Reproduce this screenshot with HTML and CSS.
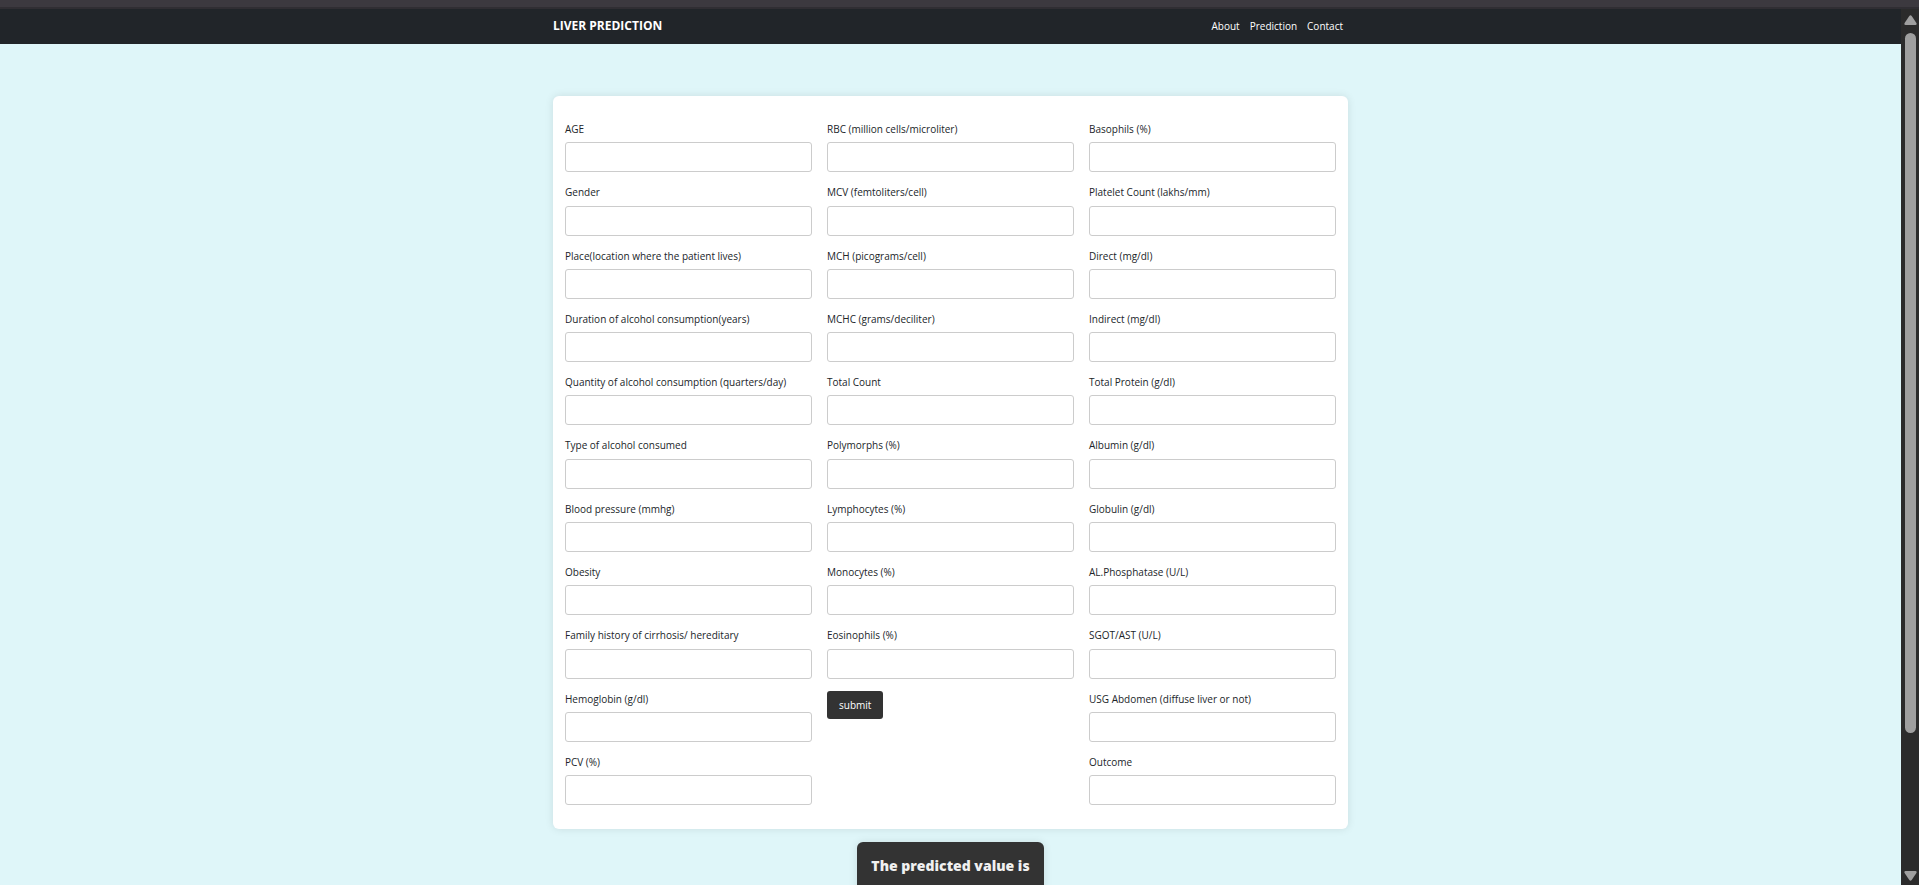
FILE: index.html
```html
<!DOCTYPE html>
<html lang="en">
<head>
<meta charset="utf-8">
<title>Liver Prediction</title>
<link rel="stylesheet" href="styles.css">
</head>
<body>
<div class="chrome-edge"></div>
<div class="window">
  <div class="page">
    <header class="navbar">
      <div class="container navbar-inner">
        <a class="brand" href="#">LIVER PREDICTION</a>
        <nav class="links">
          <a href="#about">About</a>
          <a href="#prediction">Prediction</a>
          <a href="#contact">Contact</a>
        </nav>
      </div>
    </header>
    <main class="container main">
      <form class="card" id="prediction">
        <div class="column">
          <div class="field"><label for="age">AGE</label><input id="age" type="text"></div>
          <div class="field"><label for="gender">Gender</label><input id="gender" type="text"></div>
          <div class="field"><label for="place">Place(location where the patient lives)</label><input id="place" type="text"></div>
          <div class="field"><label for="duration">Duration of alcohol consumption(years)</label><input id="duration" type="text"></div>
          <div class="field"><label for="quantity">Quantity of alcohol consumption (quarters/day)</label><input id="quantity" type="text"></div>
          <div class="field"><label for="type">Type of alcohol consumed</label><input id="type" type="text"></div>
          <div class="field"><label for="bp">Blood pressure (mmhg)</label><input id="bp" type="text"></div>
          <div class="field"><label for="obesity">Obesity</label><input id="obesity" type="text"></div>
          <div class="field"><label for="family">Family history of cirrhosis/ hereditary</label><input id="family" type="text"></div>
          <div class="field"><label for="hemoglobin">Hemoglobin (g/dl)</label><input id="hemoglobin" type="text"></div>
          <div class="field"><label for="pcv">PCV (%)</label><input id="pcv" type="text"></div>
        </div>
        <div class="column">
          <div class="field"><label for="rbc">RBC (million cells/microliter)</label><input id="rbc" type="text"></div>
          <div class="field"><label for="mcv">MCV (femtoliters/cell)</label><input id="mcv" type="text"></div>
          <div class="field"><label for="mch">MCH (picograms/cell)</label><input id="mch" type="text"></div>
          <div class="field"><label for="mchc">MCHC (grams/deciliter)</label><input id="mchc" type="text"></div>
          <div class="field"><label for="total">Total Count</label><input id="total" type="text"></div>
          <div class="field"><label for="polymorphs">Polymorphs (%)</label><input id="polymorphs" type="text"></div>
          <div class="field"><label for="lymphocytes">Lymphocytes (%)</label><input id="lymphocytes" type="text"></div>
          <div class="field"><label for="monocytes">Monocytes (%)</label><input id="monocytes" type="text"></div>
          <div class="field"><label for="eosinophils">Eosinophils (%)</label><input id="eosinophils" type="text"></div>
          <button class="submit" type="button">submit</button>
        </div>
        <div class="column">
          <div class="field"><label for="basophils">Basophils (%)</label><input id="basophils" type="text"></div>
          <div class="field"><label for="platelet">Platelet Count (lakhs/mm)</label><input id="platelet" type="text"></div>
          <div class="field"><label for="direct">Direct (mg/dl)</label><input id="direct" type="text"></div>
          <div class="field"><label for="indirect">Indirect (mg/dl)</label><input id="indirect" type="text"></div>
          <div class="field"><label for="protein">Total Protein (g/dl)</label><input id="protein" type="text"></div>
          <div class="field"><label for="albumin">Albumin (g/dl)</label><input id="albumin" type="text"></div>
          <div class="field"><label for="globulin">Globulin (g/dl)</label><input id="globulin" type="text"></div>
          <div class="field"><label for="alp">AL.Phosphatase (U/L)</label><input id="alp" type="text"></div>
          <div class="field"><label for="sgot">SGOT/AST (U/L)</label><input id="sgot" type="text"></div>
          <div class="field"><label for="usg">USG Abdomen (diffuse liver or not)</label><input id="usg" type="text"></div>
          <div class="field"><label for="outcome">Outcome</label><input id="outcome" type="text"></div>
        </div>
      </form>
      <h2 class="result">The predicted value is</h2>
    </main>
  </div>
  <div class="scrollbar" aria-hidden="true">
    <svg class="arrow" viewBox="0 0 13 10"><path d="M5.3 1Q6.5-.6 7.7 1L12.4 8Q13.2 10 11.4 10H1.6Q-.2 10 .6 8Z"/></svg>
    <div class="track"><div class="thumb"></div></div>
    <svg class="arrow" viewBox="0 0 13 10"><path d="M5.3 9Q6.5 10.6 7.7 9L12.4 2Q13.2 0 11.4 0H1.6Q-.2 0 .6 2Z"/></svg>
  </div>
</div>
</body>
</html>
```

FILE: styles.css
```css
* { box-sizing: border-box; }

body {
  display: flex;
  flex-direction: column;
  height: 100vh;
  margin: 0;
  overflow: hidden;
  background: #dff6f9;
  color: #212529;
  font-family: "Open Sans", "Noto Sans", sans-serif;
  font-size: 10px;
}

.chrome-edge {
  flex: none;
  height: 9px;
  background: #3c393f;
  border-bottom: 2px solid #302e33;
}

.window {
  display: flex;
  flex: 1;
  min-height: 0;
}

.page {
  flex: 1;
  overflow: hidden;
}

.container {
  width: 100%;
  max-width: 795px;
  margin: 0 auto;
}

.navbar {
  padding: 8px 0 9px;
  background: #212529;
}

.navbar-inner {
  display: flex;
  align-items: center;
  justify-content: space-between;
  line-height: 18px;
}

.navbar a {
  color: #fff;
  text-decoration: none;
}

.brand {
  font-size: 12px;
  font-weight: 700;
}

.links {
  display: flex;
  gap: 10px;
  padding-right: 5px;
  font-weight: 500;
}

.main {
  display: flex;
  flex-direction: column;
  align-items: center;
  gap: 13px;
  padding-top: 52px;
}

.card {
  display: grid;
  grid-template-columns: repeat(3, 1fr);
  gap: 15px;
  width: 100%;
  padding: 25px 12px 24px;
  background: #fff;
  border-radius: 6px;
  box-shadow: 0 0 8px rgba(0, 0, 0, 0.1);
}

.column {
  display: flex;
  flex-direction: column;
  align-items: flex-start;
  gap: 12px;
}

.field {
  display: flex;
  flex-direction: column;
  gap: 5px;
  width: 100%;
}

.field label {
  line-height: 1.63;
}

.field input {
  width: 100%;
  height: 30px;
  padding: 6px;
  border: 1px solid #ccc;
  border-radius: 3px;
  background: #fff;
  font: inherit;
}

.submit {
  padding: 7px 12px;
  border: 0;
  border-radius: 3px;
  background: #333;
  color: #fff;
  font: inherit;
  font-weight: 500;
}

.result {
  margin: 0;
  padding: 12px 14px 20px;
  border-radius: 6px;
  background: #333;
  box-shadow: 0 0 8px rgba(0, 0, 0, 0.1);
  color: #f0f0f0;
  font-size: 14px;
  font-weight: 800;
  line-height: 24px;
}

.scrollbar {
  display: flex;
  flex-direction: column;
  align-items: center;
  gap: 8px;
  width: 18px;
  padding: 6px 0 4px;
  background: #2b2b2b;
}

.arrow {
  flex: none;
  width: 13px;
  height: 10px;
  fill: #9f9f9f;
}

.track {
  flex: 1;
  width: 11px;
}

.thumb {
  height: 84.3%;
  border-radius: 6px;
  background: #9f9f9f;
}
```
